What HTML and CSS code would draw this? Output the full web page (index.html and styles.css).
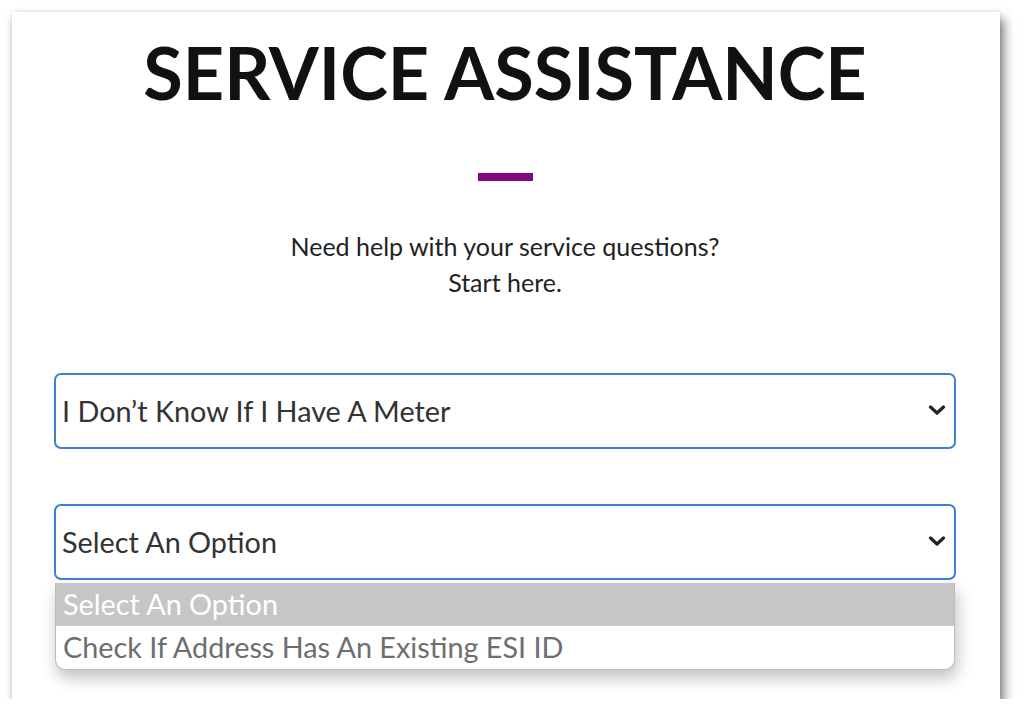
FILE: index.html
```html
<!DOCTYPE html>
<html lang="en">
<head>
<meta charset="utf-8">
<title>Service Assistance</title>
<link rel="stylesheet" href="styles.css">
</head>
<body>
<div class="card">
  <h1 class="title">SERVICE ASSISTANCE</h1>
  <div class="divider"></div>
  <p class="intro">Need help with your service questions?<br>Start here.</p>
  <div class="fields">
    <div class="select">
      <span class="select-text">I Don’t Know If I Have A Meter</span>
      <svg class="chevron" viewBox="0 0 18 10" width="18" height="10"><path d="M2.5 2 L9 8 L15.5 2" fill="none" stroke="#222" stroke-width="3.2" stroke-linecap="round" stroke-linejoin="round"/></svg>
    </div>
    <div class="select-wrap">
      <div class="select">
        <span class="select-text">Select An Option</span>
        <svg class="chevron" viewBox="0 0 18 10" width="18" height="10"><path d="M2.5 2 L9 8 L15.5 2" fill="none" stroke="#222" stroke-width="3.2" stroke-linecap="round" stroke-linejoin="round"/></svg>
      </div>
      <ul class="dropdown">
        <li class="option option-selected">Select An Option</li>
        <li class="option">Check If Address Has An Existing ESI ID</li>
      </ul>
    </div>
  </div>
</div>
</body>
</html>
```
FILE: styles.css
```css
html, body {
  margin: 0;
  padding: 0;
  background: #ffffff;
}
body {
  padding: 12px 0 0 12px;
  font-family: Lato, "Open Sans", sans-serif;
}
.card {
  width: 988px;
  height: 687px;
  box-sizing: border-box;
  background: #ffffff;
  box-shadow: 4px 7px 10px rgba(0, 0, 0, 0.5), 0 0 4px rgba(0, 0, 0, 0.12);
  padding: 16px 44px 0 42px;
}
.title {
  margin: 0;
  text-align: center;
  font-size: 72px;
  line-height: 88px;
  font-weight: 700;
  color: #111111;
}
.divider {
  width: 55px;
  height: 8px;
  background: #7e0a80;
  margin: 57px auto 0;
}
.intro {
  margin: 47px 0 0;
  text-align: center;
  font-size: 25px;
  line-height: 36px;
  color: #222222;
}
.fields {
  margin-top: 73px;
  display: flex;
  flex-direction: column;
  gap: 55px;
}
.select-wrap {
  position: relative;
}
.select {
  height: 76px;
  box-sizing: border-box;
  border: 2px solid #3f81d1;
  border-radius: 7px;
  display: flex;
  align-items: center;
  justify-content: space-between;
  padding: 0 8px 0 6px;
  background: #fff;
}
.select-text {
  font-size: 28.8px;
  color: #333333;
}
.chevron {
  display: block;
  margin-bottom: 3px;
}
.dropdown {
  position: absolute;
  left: 1px;
  right: 1px;
  top: 79px;
  margin: 0;
  padding: 0;
  list-style: none;
  background: #fff;
  border: 1px solid #bbbbbb;
  border-top: 0;
  border-radius: 0 0 10px 10px;
  overflow: hidden;
  box-shadow: 2px 8px 16px rgba(0, 0, 0, 0.25);
}
.option {
  height: 43px;
  line-height: 43px;
  padding-left: 7px;
  font-size: 28.8px;
  color: #6e6e6e;
}
.option-selected {
  background: #c6c6c6;
  color: #ffffff;
}
```
